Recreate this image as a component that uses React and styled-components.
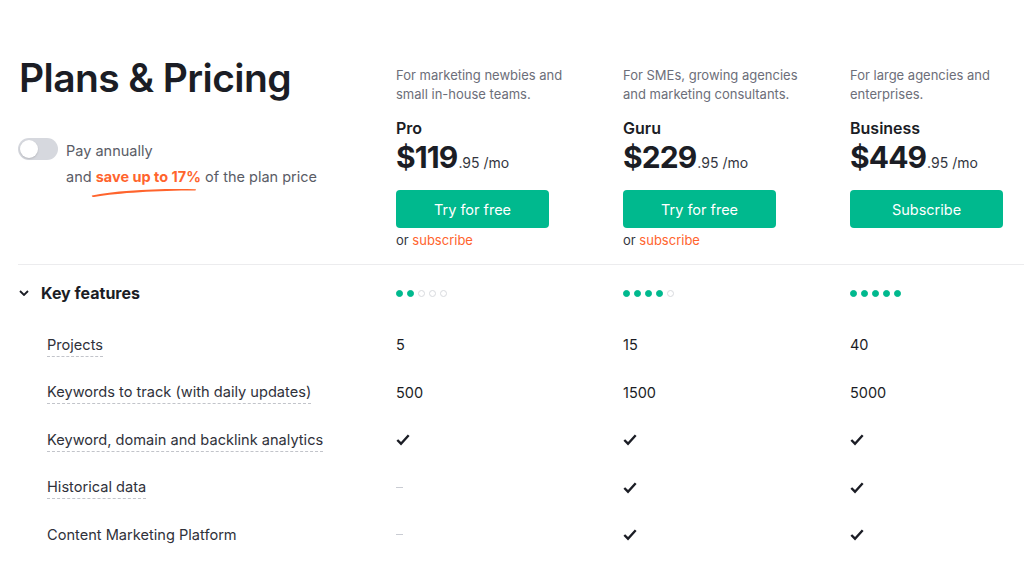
import React from 'react';
import styled, { createGlobalStyle } from 'styled-components';

const GlobalStyle = createGlobalStyle`
  html, body {
    margin: 0;
    padding: 0;
    background: #fff;
    overflow: hidden;
  }
  body {
    font-family: Inter, 'Noto Sans', sans-serif;
    color: #1b1d25;
  }
`;

const Page = styled.div`
  width: 1024px;
  height: 561px;
  overflow: hidden;
  padding-left: 18px;
  box-sizing: border-box;
`;

const Header = styled.div`
  display: grid;
  grid-template-columns: 378px repeat(3, 227px);
  padding-top: 54px;
  padding-bottom: 15px;
  border-bottom: 1px solid #ececee;
`;

const Intro = styled.div`
  display: flex;
  flex-direction: column;
`;

const Title = styled.h1`
  margin: 0 0 0 1px;
  font-size: 39px;
  line-height: 48px;
  font-weight: 600;
  letter-spacing: -0.6px;
  color: #1b1d25;
`;

const ToggleRow = styled.div`
  display: flex;
  gap: 8px;
  margin-top: 38px;
`;

const Switch = styled.span`
  flex: none;
  width: 40px;
  height: 22px;
  border-radius: 11px;
  background: #d6d8de;
  display: flex;
  align-items: center;
  padding: 2px;
  box-sizing: border-box;
  margin-top: -2px;
  &::before {
    content: '';
    width: 18px;
    height: 18px;
    border-radius: 50%;
    background: #fff;
    box-shadow: 0 1px 2px rgba(0, 0, 0, 0.15);
  }
`;

const ToggleText = styled.div`
  font-size: 14.5px;
  line-height: 26px;
  color: #5a5c66;
  margin-top: -2px;
`;

const Highlight = styled.span`
  position: relative;
  color: #ff642d;
  font-weight: 700;
`;

const Swoosh = styled.svg`
  position: absolute;
  left: -5px;
  top: 19px;
  width: 106px;
  height: 10px;
`;

const Plan = styled.div`
  display: flex;
  flex-direction: column;
  align-items: flex-start;
  padding-top: 12px;
`;

const Desc = styled.p`
  margin: 0;
  font-size: 13px;
  line-height: 19px;
  color: #6c6e79;
  width: 190px;
`;

const PlanName = styled.div`
  margin-top: 14px;
  font-size: 16px;
  line-height: 20px;
  font-weight: 600;
  color: #1b1d25;
`;

const Price = styled.div`
  margin-top: 1px;
  font-size: 30px;
  line-height: 36px;
  font-weight: 700;
  letter-spacing: -0.9px;
  color: #1b1d25;
  display: flex;
  align-items: baseline;
`;

const Cents = styled.span`
  font-size: 14px;
  font-weight: 400;
  letter-spacing: 0;
  color: #333640;
  margin-left: 1px;
`;

const Button = styled.button`
  margin-top: 9px;
  width: 153px;
  height: 38px;
  border: none;
  border-radius: 4px;
  background: #00b98e;
  color: #fff;
  font-family: inherit;
  font-size: 14.5px;
  cursor: pointer;
`;

const OrLine = styled.div`
  margin-top: 3px;
  font-size: 13px;
  line-height: 18px;
  color: #333640;
  span {
    color: #ff642d;
  }
`;

const Row = styled.div`
  display: grid;
  grid-template-columns: 378px repeat(3, 227px);
  align-items: center;
  height: ${(p) => p.$h || 47.5}px;
`;

const SectionTitle = styled.div`
  display: flex;
  align-items: center;
  gap: 12px;
  padding-left: 1px;
  font-size: 16px;
  font-weight: 700;
  color: #1b1d25;
`;

const Dots = styled.div`
  display: flex;
  gap: 4px;
`;

const Dot = styled.span`
  width: 7px;
  height: 7px;
  border-radius: 50%;
  box-sizing: border-box;
  background: ${(p) => (p.$on ? '#00b98e' : '#fff')};
  border: 1px solid ${(p) => (p.$on ? '#00b98e' : '#d8dade')};
`;

const Label = styled.div`
  padding-left: 29px;
  font-size: 14.6px;
  color: #2f313a;
  span {
    padding-bottom: 2px;
    border-bottom: ${(p) => (p.$plain ? 'none' : '1px dashed #c2c4ca')};
  }
`;

const Value = styled.div`
  font-size: 14.5px;
  color: #1b1d25;
  display: flex;
  align-items: center;
`;

const Dash = styled.span`
  width: 7px;
  height: 1px;
  background: #c9ccd3;
`;

const Check = () => (
  <svg width="14" height="13" viewBox="0 0 14 13">
    <path d="M1.3 7 L5 10.7 L12.7 2.2" fill="none" stroke="#1b1d25" strokeWidth="2.4" />
  </svg>
);

const Chevron = () => (
  <svg width="10" height="6" viewBox="0 0 10 6">
    <path d="M1 1 L5 5 L9 1" fill="none" stroke="#1b1d25" strokeWidth="1.8" />
  </svg>
);

const plans = [
  {
    desc: 'For marketing newbies and small in-house teams.',
    name: 'Pro',
    price: '$119',
    cta: 'Try for free',
    sub: true,
    dots: 2,
  },
  {
    desc: 'For SMEs, growing agencies and marketing consultants.',
    name: 'Guru',
    price: '$229',
    cta: 'Try for free',
    sub: true,
    dots: 4,
  },
  {
    desc: 'For large agencies and enterprises.',
    name: 'Business',
    price: '$449',
    cta: 'Subscribe',
    sub: false,
    dots: 5,
  },
];

const features = [
  { label: 'Projects', values: ['5', '15', '40'] },
  { label: 'Keywords to track (with daily updates)', values: ['500', '1500', '5000'] },
  { label: 'Keyword, domain and backlink analytics', values: [true, true, true] },
  { label: 'Historical data', values: [false, true, true] },
  { label: 'Content Marketing Platform', values: [false, true, true], plain: true },
];

const renderValue = (v) => {
  if (v === true) return <Check />;
  if (v === false) return <Dash />;
  return v;
};

export default function App() {
  return (
    <>
      <GlobalStyle />
      <Page>
        <Header>
          <Intro>
            <Title>Plans &amp; Pricing</Title>
            <ToggleRow>
              <Switch />
              <ToggleText>
                Pay annually
                <br />
                and{' '}
                <Highlight>
                  save up to 17%
                  <Swoosh viewBox="0 0 106 10">
                    <path
                      d="M1 8.5 C 25 3.5, 65 1.2, 105 2.2 L 104.5 3.6 C 66 3.6, 28 6, 3 10 C 1.5 10.3, 0.3 9.3, 1 8.5 Z"
                      fill="#ff642d"
                    />
                  </Swoosh>
                </Highlight>{' '}
                of the plan price
              </ToggleText>
            </ToggleRow>
          </Intro>
          {plans.map((p) => (
            <Plan key={p.name}>
              <Desc>{p.desc}</Desc>
              <PlanName>{p.name}</PlanName>
              <Price>
                {p.price}
                <Cents>.95 /mo</Cents>
              </Price>
              <Button>{p.cta}</Button>
              {p.sub && (
                <OrLine>
                  or <span>subscribe</span>
                </OrLine>
              )}
            </Plan>
          ))}
        </Header>

        <Row $h={56}>
          <SectionTitle>
            <Chevron />
            Key features
          </SectionTitle>
          {plans.map((p) => (
            <Dots key={p.name}>
              {[0, 1, 2, 3, 4].map((i) => (
                <Dot key={i} $on={i < p.dots} />
              ))}
            </Dots>
          ))}
        </Row>
        {features.map((f) => (
          <Row key={f.label}>
            <Label $plain={f.plain}>
              <span>{f.label}</span>
            </Label>
            {f.values.map((v, i) => (
              <Value key={i}>{renderValue(v)}</Value>
            ))}
          </Row>
        ))}
      </Page>
    </>
  );
}
